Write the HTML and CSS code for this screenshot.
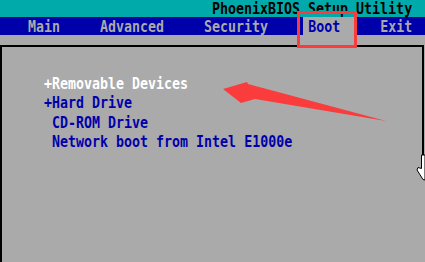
FILE: index.html
```html
<!DOCTYPE html>
<html lang="en">
<head>
  <meta charset="UTF-8">
  <meta name="viewport" content="width=device-width, initial-scale=1.0">
  <title>PhoenixBIOS Setup Utility - Boot</title>
  <link rel="stylesheet" href="styles.css">
</head>
<body>

  <!-- 상단 타이틀 -->
  <header class="title-bar">
    <span class="glyphs">PhoenixBIOS Setup Utility</span>
  </header>

  <!-- 메뉴 바 -->
  <nav class="menu-bar">
    <span class="menu-item item-main"><span class="glyphs">Main</span></span>
    <span class="menu-item item-advanced"><span class="glyphs">Advanced</span></span>
    <span class="menu-item item-security"><span class="glyphs">Security</span></span>
    <span class="menu-item item-boot active"><span class="glyphs">Boot</span></span>
    <span class="menu-item item-exit"><span class="glyphs">Exit</span></span>
  </nav>

  <!-- 부트 순서 패널 -->
  <main class="panel">
    <ul class="boot-list">
      <li class="boot-item selected"><span class="glyphs">+Removable Devices</span></li>
      <li class="boot-item"><span class="glyphs">+Hard Drive</span></li>
      <li class="boot-item"><span class="glyphs"> CD-ROM Drive</span></li>
      <li class="boot-item"><span class="glyphs"> Network boot from Intel E1000e</span></li>
    </ul>
  </main>

  <!-- 스크린샷 위의 주석 (빨간 상자, 화살표, 마우스 커서) -->
  <div class="mark-box"></div>
  <svg class="overlay" width="425" height="262" viewBox="0 0 425 262">
    <polygon class="mark-arrow" points="223,89 247,82 248,84 386,121 255,99 241,103"/>
    <polygon class="cursor" points="421.5,155 425,155 425,180 423,179.5 417,170 418,167.5 421.5,168.5"/>
  </svg>

</body>
</html>
```

FILE: styles.css
```css
/* 전체 화면: BIOS 회색 배경 */
body, html {
  margin: 0;
  padding: 0;
  width: 425px;
  height: 262px;
  overflow: hidden;
}

body {
  position: relative;
  background-color: #aaaaaa;
  font-family: 'DejaVu Sans Mono', 'Liberation Mono', monospace;
  font-weight: bold;
  font-size: 13.3px;
}

/* 텍스트 모드 글꼴처럼 세로로 늘린 글자 */
.glyphs {
  display: inline-block;
  white-space: pre;
  transform: scaleY(1.2);
}

/* 상단 타이틀 */
.title-bar {
  height: 17px;
  line-height: 17px;
  padding-left: 212px;
  background-color: #00aaaa;
  color: #000;
}

/* 메뉴 바 */
.menu-bar {
  display: flex;
  height: 18px;
  line-height: 18px;
  padding-left: 28px;
  background-color: #0000aa;
  color: #aaaaaa;
}

.menu-item {
  height: 18px;
  padding-top: 1px;
  box-sizing: border-box;
}

.item-advanced {
  margin-left: 40px;
}

.item-security {
  margin-left: 40px;
}

.item-boot {
  margin-left: 35px;
  padding-left: 5px;
  padding-right: 15px;
}

.item-exit {
  margin-left: 25px;
}

.menu-item.active {
  background-color: #aaaaaa;
  color: #0000aa;
}

/* 부트 순서 패널 */
.panel {
  margin-top: 10px;
  height: 217px;
  width: 424px;
  box-sizing: border-box;
  border-top: 2px solid #000;
  border-left: 2px solid #000;
  position: relative;
}

/* 오른쪽 테두리 (커서 아래로는 보이지 않음) */
.panel::after {
  content: '';
  position: absolute;
  top: -2px;
  right: 0;
  width: 2px;
  height: 110px;
  background-color: #000;
}

.boot-list {
  list-style: none;
  margin: 0;
  padding: 27px 0 0 42px;
}

.boot-item {
  height: 19.3px;
  line-height: 19.3px;
  color: #0000aa;
}

.boot-item.selected {
  color: #ffffff;
}

/* 빨간 강조 상자 */
.mark-box {
  position: absolute;
  top: 11px;
  left: 297px;
  width: 60px;
  height: 37px;
  box-sizing: border-box;
  border: 3px solid #fb3c3c;
}

/* 화살표와 커서 */
.overlay {
  position: absolute;
  top: 0;
  left: 0;
  pointer-events: none;
}

.mark-arrow {
  fill: #fb3c3c;
}

.cursor {
  fill: #ffffff;
  stroke: #000;
  stroke-width: 1;
}
```
